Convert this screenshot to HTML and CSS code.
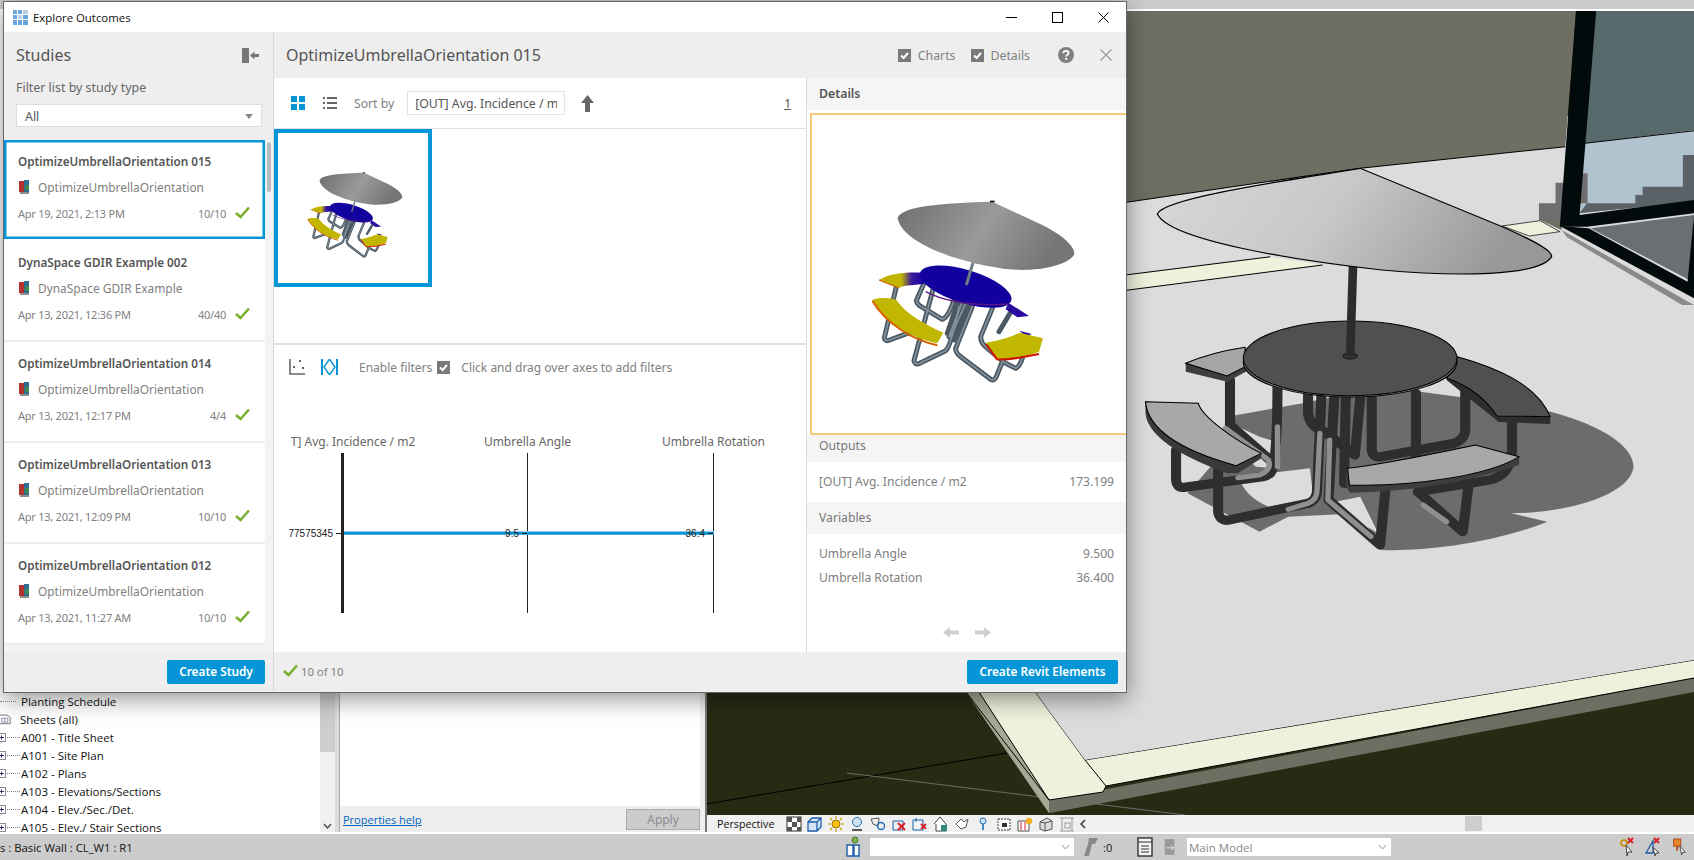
FILE: index.html
```html
<!DOCTYPE html>
<html lang="en">
<head>
<meta charset="utf-8">
<title>Explore Outcomes</title>
<link rel="stylesheet" href="styles.css">
</head>
<body>
<svg class="defs" width="0" height="0" aria-hidden="true">
  <defs>
    <clipPath id="axisClip"><rect x="290.5" y="425" width="510" height="30"/></clipPath>
    <linearGradient id="shadeThumb" x1="0" x2="1" y1="0" y2="0.25">
      <stop offset="0" stop-color="#6e6e6e"/><stop offset="0.55" stop-color="#9a9a9a"/><stop offset="1" stop-color="#757575"/>
    </linearGradient>
    <linearGradient id="benchFade" x1="0" x2="1" y1="0" y2="0">
      <stop offset="0" stop-color="#c2b500"/><stop offset="0.5" stop-color="#c2b500"/><stop offset="0.72" stop-color="#3a1a9a"/><stop offset="1" stop-color="#16009e"/>
    </linearGradient>
    <linearGradient id="shadeCone" x1="0" x2="1" y1="0" y2="0.2">
      <stop offset="0" stop-color="#d8d8d8"/><stop offset="0.5" stop-color="#c8c8c8"/><stop offset="1" stop-color="#989898"/>
    </linearGradient>
    <symbol id="model" viewBox="0 0 960 990">
      <g fill="none" stroke-linecap="round" stroke-linejoin="round">
        <g stroke="#4b5862" stroke-width="15">
          <path d="M345 520 L322 572 Q325 585 340 592 L400 628 Q418 622 435 570"/>
          <path d="M262 530 L226 684 Q228 696 242 690 L312 664"/>
          <path d="M372 538 L315 752 Q318 766 332 760 L410 722 Q426 708 450 590"/>
          <path d="M490 590 L440 715 Q440 730 455 740 L545 808 Q556 815 562 800 L582 750"/>
          <path d="M550 595 L515 680 Q515 700 535 715 L590 760 L620 775 Q632 770 640 745"/>
          <path d="M603 610 L570 665"/>
          <path d="M470 580 L425 680 M458 580 L420 680 M445 580 L415 670 M482 590 L435 690"/>
        </g>
        <g stroke="#83929e" stroke-width="5">
          <path d="M345 520 L322 572 Q325 585 340 592 L400 628 Q418 622 435 570"/>
          <path d="M262 530 L226 684 Q228 696 242 690 L312 664"/>
          <path d="M372 538 L315 752 Q318 766 332 760 L410 722 Q426 708 450 590"/>
          <path d="M490 590 L440 715 Q440 730 455 740 L545 808 Q556 815 562 800 L582 750"/>
          <path d="M550 595 L515 680 Q515 700 535 715 L590 760 L620 775 Q632 770 640 745"/>
          <path d="M470 580 L425 680 M458 580 L420 680"/>
        </g>
      </g>
      <path d="M210 510 C240 490 290 485 340 488 L345 522 C320 525 290 525 270 533 Z" fill="url(#benchFade)"/>
      <path d="M210 510 L270 534" stroke="#d06000" stroke-width="4" fill="none"/>
      <path d="M598 578 L660 618 L625 622 L590 598 Z" fill="#2a0a9f"/>
      <ellipse cx="470" cy="530" rx="143" ry="50" transform="rotate(17 470 530)" fill="#12009f"/>
      <path d="M350 545 Q440 592 600 582" stroke="#5a1a80" stroke-width="4" fill="none"/>
      <path d="M190 570 C210 560 250 565 262 570 C290 610 340 640 403 668 L385 700 C310 685 230 640 190 570 Z" fill="#c2b700"/>
      <path d="M190 572 C230 640 310 690 385 706" stroke="#d76000" stroke-width="6" fill="none"/>
      <path d="M632 662 L668 672 L650 680 Z" fill="#2a0a9f"/>
      <path d="M530 698 C580 690 610 680 632 668 L702 685 L690 726 C650 740 600 750 560 748 Z" fill="#c2b700"/>
      <path d="M532 703 L564 748 C610 750 650 740 690 732" stroke="#cf1100" stroke-width="6" fill="none"/>
      <path d="M492 458 L472 525" stroke="#6b7b86" stroke-width="9"/>
      <path d="M266 325 C270 290 400 278 550 275 L700 345 C780 385 800 420 795 435 C770 470 680 485 600 478 C450 460 280 400 266 325 Z" fill="url(#shadeThumb)"/>
      <rect x="543" y="272" width="14" height="5" fill="#111"/>
    </symbol>
    <symbol id="book" viewBox="0 0 11 14">
      <rect x="0" y="1" width="5" height="11" fill="#b5332e"/>
      <rect x="5" y="0" width="5" height="12" fill="#2c6e8f"/>
      <rect x="6" y="5" width="4" height="5" fill="#3d8a53"/>
      <rect x="1" y="12" width="9" height="2" fill="#8a8f94"/>
    </symbol>
    <symbol id="check" viewBox="0 0 15 13">
      <path d="M1 7 L5.5 11 L14 1.5" fill="none" stroke="#78b02e" stroke-width="2.6"/>
    </symbol>
    <symbol id="tick" viewBox="0 0 13 13">
      <rect width="13" height="13" fill="#7a7a7a"/>
      <path d="M3 6.5 L5.6 9 L10 4" fill="none" stroke="#fff" stroke-width="2"/>
    </symbol>
    <symbol id="expander" viewBox="0 0 7 9">
      <rect x="-3.5" y="0.5" width="9" height="8" fill="#fff" stroke="#8a8a9a"/>
      <path d="M-1 4.5 H4 M1.5 2.5 V6.5" stroke="#33336a" fill="none"/>
    </symbol>
  </defs>
</svg>

<div class="desktop">
  <div class="revit">
    <div class="ribbon-edge"></div>
    <div class="workspace">
      <aside class="browser">
        <div class="tree">
          <div class="tree-row"><span class="leader leader-long"></span>Planting Schedule</div>
          <div class="tree-row tree-root">
            <svg class="sheets-icon" viewBox="0 0 14 14"><path d="M-2 2 H9 L13 5 V13 H-2 Z" fill="#fff" stroke="#555"/><path d="M2 6 H10 V11 H2 Z M6 6 V11" fill="none" stroke="#7a7a9a"/></svg>Sheets (all)
          </div>
          <div class="tree-row"><svg class="exp"><use href="#expander"/></svg><span class="leader"></span>A001 - Title Sheet</div>
          <div class="tree-row"><svg class="exp"><use href="#expander"/></svg><span class="leader"></span>A101 - Site Plan</div>
          <div class="tree-row"><svg class="exp"><use href="#expander"/></svg><span class="leader"></span>A102 - Plans</div>
          <div class="tree-row"><svg class="exp"><use href="#expander"/></svg><span class="leader"></span>A103 - Elevations/Sections</div>
          <div class="tree-row"><svg class="exp"><use href="#expander"/></svg><span class="leader"></span>A104 - Elev./Sec./Det.</div>
          <div class="tree-row"><svg class="exp"><use href="#expander"/></svg><span class="leader"></span>A105 - Elev./ Stair Sections</div>
        </div>
        <div class="vscroll">
          <div class="vscroll-thumb"></div>
          <svg class="vscroll-down" viewBox="0 0 9 6"><path d="M1 1 L4.5 5 L8 1" fill="none" stroke="#444" stroke-width="1.3"/></svg>
        </div>
      </aside>
      <div class="pane-gap"></div>
      <section class="props">
        <div class="props-body"></div>
        <div class="props-foot">
          <a class="props-link" href="#">Properties help</a>
          <button class="apply" type="button">Apply</button>
        </div>
      </section>
      <div class="view-gap"></div>
      <main class="viewport">
        <svg class="scene" viewBox="707 11 987 804" preserveAspectRatio="none">
          <rect x="707" y="11" width="987" height="804" fill="#262c14"/>
          <path d="M706 804 L1007 753" stroke="#000" stroke-width="1" fill="none"/>
          <path d="M847 773 L1185 815" stroke="#6d6d66" stroke-width="1" fill="none"/>
          <!-- slab -->
          <path d="M966 692 L1049 813 L1050 813 L1694 692 L1694 678 L1049 800 L979 692 Z" fill="#6e6e62"/>
          <path d="M966 692 L1049 813 L1049 800 L979 692 Z" fill="#a6a896"/>
          <path d="M979 692 L1036 693 L1085 760 L1694 660 L1694 678 L1106 786 L1103 792 L1049 800 Z" fill="#eef2dc"/>
          <path d="M1036 693 L1085 760 L1694 660 M979 692 L1049 800 L1103 792 L1106 786 L1085 760 M1106 786 L1694 678 M966 692 L1049 800" fill="none" stroke="#000" stroke-width="1"/>
          <path d="M900 200 L1694 100 L1694 660 L1085 760 L1036 693 Z" fill="#dcdcdc"/>
          <!-- wall, stripe, window: coordinates measured at 2.78 x 3 -->
          <g transform="translate(1130 0) scale(.3597 .3333)">
            <path d="M-400 33 H1240 L1210 440 L640 505 L0 605 L-400 660 Z" fill="#6e6e62"/>
            <path d="M-400 660 L0 605 L640 505 L1210 440" fill="none" stroke="#000" stroke-width="3"/>
            <path d="M-400 878 L390 770 L535 795 L-400 925 Z" fill="#eef2dc"/>
            <path d="M-400 878 L390 770 M-400 925 L535 795" fill="none" stroke="#000" stroke-width="3"/>
            <path d="M1035 678 L1140 662 L1195 695 L1110 708 Z" fill="#eef2dc" stroke="#000" stroke-width="2"/>
            <path d="M1183 548 H1205 V660 H1137 V610 H1183 Z" fill="#6e6e6e"/>
            <path d="M1140 660 H1200 V690 Z" fill="#6e6e62"/>
            <path d="M1290 33 H1568 V390 L1265 430 Z" fill="#566a6c"/>
            <path d="M1265 430 L1568 392 V600 L1250 640 Z" fill="#b0c3ce"/>
            <path d="M1250 640 L1270 610 H1405 V585 H1425 V560 H1537 V465 H1568 V605 Z" fill="#5a6268"/>
            <path d="M1240 520 H1272 V610 H1240 Z" fill="#6e6e6e"/>
            <path d="M1240 33 H1296 L1250 645 L1568 600 V640 L1270 680 L1195 680 Z" fill="#020a0c"/>
            <path d="M1265 430 L1568 392" stroke="#000" stroke-width="3"/>
            <path d="M1280 685 L1568 645 L1555 840 Z" fill="#6a7072"/>
            <path d="M1200 690 L1568 915 L1535 915 L1215 712 Z" fill="#8a8a8a"/>
            <path d="M1195 678 L1275 685 L1550 845 L1568 645 V895 Z" fill="#020a0c"/>
          </g>
          <!-- table: coordinates measured at 2.78 x 3 -->
          <g transform="translate(1130 300) scale(.3597 .3333)">
            <path d="M1050 310 C1250 340 1400 420 1400 500 C1390 590 1200 640 1060 640 L1160 665 C1000 735 800 755 700 750 L640 640 L440 650 L360 695 L160 580 L240 480 L270 350 L480 310 L700 260 Z" fill="#6c6c6c"/>
            <path d="M300 530 L500 505 L510 595 L385 620 C340 600 315 570 300 530 Z" fill="#dcdcdc"/>
            <path d="M420 430 L410 505 L350 500 L240 390 L280 370 L360 410 Z" fill="#dcdcdc"/>
            <path d="M550 610 L640 590 L690 700 Z" fill="#dcdcdc"/>
            <g fill="none" stroke-linecap="round" stroke-linejoin="round">
              <g stroke="#2e2e2e" stroke-width="28">
                <path d="M278 240 V375 L400 490 Q395 525 370 530 L150 562 Q128 565 128 535 V450"/>
                <path d="M410 250 Q410 500 390 520"/>
                <path d="M245 510 V635 Q250 665 275 660 L495 610 Q520 600 520 570 L532 290"/>
                <path d="M568 290 L552 600 L695 735 L710 570"/>
                <path d="M495 285 V340 Q500 380 540 395 L625 465 L640 295"/>
                <path d="M600 290 L595 550"/>
                <path d="M672 295 V450 Q675 475 700 470 L900 430 Q930 420 932 390 V270"/>
                <path d="M795 280 V480"/>
                <path d="M1062 365 V450 Q1060 525 1000 540 L800 575 L925 695 L942 550"/>
              </g>
              <g stroke="#8f8f8f" stroke-width="15">
                <path d="M265 385 L385 480 Q395 510 360 525 L300 533"/>
                <path d="M410 380 V500"/>
                <path d="M440 628 L495 610 Q520 600 520 570 L528 400"/>
                <path d="M555 420 L550 600 L670 710"/>
                <path d="M815 615 L880 665"/>
              </g>
            </g>
            <path d="M43 305 L190 310 C200 350 290 420 365 460 V475 L300 520 L270 520 C170 480 50 420 43 340 Z" fill="#3a3a3a"/>
            <path d="M43 305 L190 310 C200 350 290 420 365 460 L295 497 C170 460 50 400 43 305 Z" fill="#a8a8a8" stroke="#000" stroke-width="3"/>
            <path d="M155 190 C210 165 270 150 320 142 L340 205 L270 245 L155 215 Z" fill="#3e3e3e"/>
            <path d="M155 190 C210 165 270 150 320 142 V200 L270 228 Z" fill="#a5a5a5" stroke="#000" stroke-width="3"/>
            <path d="M910 170 C1010 200 1130 250 1168 350 V372 L1025 366 L880 240 Z" fill="#2e2e2e"/>
            <path d="M910 170 C1010 200 1130 250 1168 350 L1020 348 C990 300 950 260 880 235 Z" fill="#505050" stroke="#000" stroke-width="3"/>
            <path d="M600 510 C720 490 850 450 960 435 L1082 470 V495 C960 540 800 575 612 578 L600 560 Z" fill="#3e3e3e"/>
            <path d="M605 505 C720 490 850 460 960 435 L1082 470 C1000 525 800 560 610 555 Z" fill="#a8a8a8" stroke="#000" stroke-width="3"/>
            <ellipse cx="612" cy="185" rx="297" ry="106" fill="#8a8a8a" stroke="#000" stroke-width="3"/>
            <ellipse cx="612" cy="175" rx="297" ry="112" fill="#505050" stroke="#000" stroke-width="3"/>
            <ellipse cx="612" cy="168" rx="20" ry="9" fill="#333" stroke="#000" stroke-width="2"/>
            <path d="M620 -104 L612 168" stroke="#2c2c2c" stroke-width="24"/>
          </g>
          <g transform="translate(1130 0) scale(.3597 .3333)">
            <path d="M76 642 C90 600 350 555 640 505 L1030 678 C1140 730 1175 755 1172 770 C1140 830 900 830 700 810 C450 780 110 720 76 642 Z" fill="url(#shadeCone)" stroke="#000" stroke-width="3.5"/>
          </g>
        </svg>
        <div class="viewbar">
          <span class="view-name">Perspective</span>
          <div class="view-tools">
            <svg viewBox="0 0 16 16"><rect x="1" y="1" width="14" height="14" fill="#fff" stroke="#333"/><path d="M1 1h5v5H1zM6 6h5v5H6zM11 1h4v5h-4zM1 11h5v4H1zM11 11h4v4h-4z" fill="#555"/></svg>
            <svg viewBox="0 0 16 16"><path d="M1 6 L5 2 H14 V11 L10 15 H1 Z M1 6 H10 V15 M10 6 L14 2" fill="#d4e6f5" stroke="#1d5fa8" stroke-width="1.3"/></svg>
            <svg viewBox="0 0 16 16"><circle cx="8" cy="8" r="4" fill="#f4c20d" stroke="#a87800"/><path d="M8 0V3M8 13V16M0 8H3M13 8H16M2 2L4 4M12 12L14 14M14 2L12 4M4 12L2 14" stroke="#c99700" stroke-width="1.2"/></svg>
            <svg viewBox="0 0 16 16"><circle cx="8" cy="6" r="4.5" fill="#cfe4f5" stroke="#2a70b0"/><path d="M3 14H13" stroke="#555" stroke-width="2"/></svg>
            <svg viewBox="0 0 16 16"><path d="M1 3 L9 2 L8 10 L3 8 Z" fill="#eee" stroke="#555"/><circle cx="11" cy="10" r="3.5" fill="none" stroke="#1d6fb8" stroke-width="1.4"/></svg>
            <svg viewBox="0 0 16 16"><path d="M2 5H12V14H2Z" fill="#e8eef5" stroke="#1d5fa8"/><path d="M7 7 L14 14 M14 7 L7 14" stroke="#d8202a" stroke-width="2"/></svg>
            <svg viewBox="0 0 16 16"><path d="M1 4H11V14H1Z" fill="#eef3f8" stroke="#1d5fa8"/><path d="M9 8 L14 13 M14 8 L9 13" stroke="#d8202a" stroke-width="1.8"/><path d="M4 2V6" stroke="#1d5fa8"/></svg>
            <svg viewBox="0 0 16 16"><path d="M1 8 L7 1 L13 8 V15 H3 V8" fill="#fff" stroke="#444"/><rect x="8" y="9" width="6" height="6" fill="#2f8a78"/></svg>
            <svg viewBox="0 0 16 16"><path d="M2 8 L7 3 L10 6 L14 3 L12 11 L7 13 Z" fill="#fff" stroke="#555"/></svg>
            <svg viewBox="0 0 16 16"><circle cx="8" cy="5" r="3" fill="#cfe4f5" stroke="#1d6fb8"/><path d="M8 8V14" stroke="#1d6fb8" stroke-width="1.6"/></svg>
            <svg viewBox="0 0 16 16"><rect x="2" y="3" width="12" height="11" fill="#fff" stroke="#333" stroke-dasharray="2 1"/><rect x="6" y="7" width="5" height="4" fill="#333"/></svg>
            <svg viewBox="0 0 16 16"><path d="M1 5H12V15H1Z" fill="#fff" stroke="#555"/><path d="M4 6V14M8 6V14" stroke="#d8202a"/><circle cx="12" cy="5" r="3.2" fill="#f4b324"/></svg>
            <svg viewBox="0 0 16 16"><path d="M2 6 L9 2 L14 5 V13 L7 15 L2 13 Z" fill="#ddd" stroke="#555"/><path d="M7 7V15M2 6L7 7L14 5" stroke="#555" fill="none"/></svg>
            <svg class="tool-dim" viewBox="0 0 16 16"><path d="M1 2H15M1 15H15M3 2V15M13 2V15" stroke="#999" fill="none"/><rect x="6" y="7" width="5" height="5" fill="none" stroke="#999"/></svg>
            <svg class="tool-chevron" viewBox="0 0 6 10"><path d="M5 1 L1 5 L5 9" fill="none" stroke="#333" stroke-width="1.5"/></svg>
          </div>
          <div class="hscroll-thumb"></div>
        </div>
      </main>
    </div>
    <footer class="status">
      <span class="status-text">s : Basic Wall : CL_W1 : R1</span>
      <svg class="status-worksets" viewBox="0 0 16 22"><circle cx="10" cy="4" r="3" fill="#7fb64b" stroke="#47702a"/><path d="M2 9H8V20H2ZM9 9H14V20H9Z" fill="#fff" stroke="#1d5fa8" stroke-width="1.4"/></svg>
      <div class="status-combo"><svg viewBox="0 0 9 6"><path d="M1 1 L4.5 5 L8 1" fill="none" stroke="#999"/></svg></div>
      <svg class="status-pin" viewBox="0 0 16 22"><path d="M6 2H15L12 8H9L6 20H1L5 8Z" fill="#888"/></svg>
      <span class="status-count">:0</span>
      <svg class="status-list" viewBox="0 0 16 20"><rect x="1" y="1" width="14" height="18" fill="#f4f4f4" stroke="#333" stroke-width="1.4"/><path d="M1 5H15M4 9H12M4 12H12M4 15H12" stroke="#333"/></svg>
      <svg class="status-door" viewBox="0 0 16 20"><path d="M2 1H13V19H2Z" fill="#999"/><path d="M4 11H12M9 8L12 11L9 14" stroke="#eee" fill="none"/></svg>
      <div class="status-combo status-combo-model"><span>Main Model</span><svg viewBox="0 0 9 6"><path d="M1 1 L4.5 5 L8 1" fill="none" stroke="#999"/></svg></div>
      <div class="status-right">
        <svg viewBox="0 0 16 20"><circle cx="5" cy="6" r="3" fill="none" stroke="#c98a00" stroke-width="1.6"/><path d="M9 1 L14 6 M14 1 L9 6" stroke="#d8202a" stroke-width="2"/><path d="M7 8 L13 15 L9 15 L8 19 Z" fill="#fff" stroke="#444"/></svg>
        <svg viewBox="0 0 16 20"><path d="M1 16 L8 4 L8 16 Z" fill="none" stroke="#1d5fa8" stroke-width="1.3"/><path d="M9 1 L14 6 M14 1 L9 6" stroke="#d8202a" stroke-width="2"/><path d="M8 10 L14 16 L11 16 L10 19 Z" fill="#fff" stroke="#444"/></svg>
        <svg viewBox="0 0 18 20"><rect x="3" y="1" width="8" height="8" fill="#e8862a" stroke="#a8401a"/><path d="M7 9V14" stroke="#a8401a" stroke-width="2"/><path d="M10 9 L16 16 L13 16 L12 19 Z" fill="#fff" stroke="#444"/></svg>
      </div>
    </footer>
  </div>

  <div class="dialog">
    <header class="titlebar">
      <svg class="app-icon" viewBox="0 0 15 15"><path d="M0 0h4v4H0zM5 0h4v4H5zM10 0h5v4h-5zM0 5h4v4H0zM5 5h4v4H5zM10 5h5v4h-5zM0 10h4v5H0zM5 10h4v5H5zM10 10h5v5h-5z" fill="#6aa7de"/><path d="M5 5h4v4H5zM10 0h5v4h-5z" fill="#b9d2e8"/></svg>
      <span class="title-text">Explore Outcomes</span>
      <div class="win-controls">
        <svg viewBox="0 0 11 11"><path d="M0 5.5H11" stroke="#000"/></svg>
        <svg viewBox="0 0 11 11"><rect x="0.5" y="0.5" width="10" height="10" fill="none" stroke="#000"/></svg>
        <svg viewBox="0 0 11 11"><path d="M0.5 0.5L10.5 10.5M10.5 0.5L0.5 10.5" stroke="#000"/></svg>
      </div>
    </header>
    <div class="dialog-body">
      <aside class="sidebar">
        <div class="side-top">
          <div class="side-head">
            <h2 class="side-title">Studies</h2>
            <svg class="collapse" viewBox="0 0 17 15"><rect width="7" height="15" fill="#777"/><path d="M8 7.5L12.5 3.5V6H17V9H12.5V11.5Z" fill="#777"/></svg>
          </div>
          <div class="side-label">Filter list by study type</div>
          <div class="select-box">All<span class="caret"></span></div>
        </div>
        <div class="study-list">
          <article class="study study-active">
            <div class="study-name">OptimizeUmbrellaOrientation 015</div>
            <div class="study-type"><svg class="book"><use href="#book"/></svg>OptimizeUmbrellaOrientation</div>
            <div class="study-meta"><span>Apr 19, 2021, 2:13 PM</span><span class="study-count">10/10</span><svg class="ok"><use href="#check"/></svg></div>
          </article>
          <article class="study">
            <div class="study-name">DynaSpace GDIR Example 002</div>
            <div class="study-type"><svg class="book"><use href="#book"/></svg>DynaSpace GDIR Example</div>
            <div class="study-meta"><span>Apr 13, 2021, 12:36 PM</span><span class="study-count">40/40</span><svg class="ok"><use href="#check"/></svg></div>
          </article>
          <article class="study">
            <div class="study-name">OptimizeUmbrellaOrientation 014</div>
            <div class="study-type"><svg class="book"><use href="#book"/></svg>OptimizeUmbrellaOrientation</div>
            <div class="study-meta"><span>Apr 13, 2021, 12:17 PM</span><span class="study-count">4/4</span><svg class="ok"><use href="#check"/></svg></div>
          </article>
          <article class="study">
            <div class="study-name">OptimizeUmbrellaOrientation 013</div>
            <div class="study-type"><svg class="book"><use href="#book"/></svg>OptimizeUmbrellaOrientation</div>
            <div class="study-meta"><span>Apr 13, 2021, 12:09 PM</span><span class="study-count">10/10</span><svg class="ok"><use href="#check"/></svg></div>
          </article>
          <article class="study">
            <div class="study-name">OptimizeUmbrellaOrientation 012</div>
            <div class="study-type"><svg class="book"><use href="#book"/></svg>OptimizeUmbrellaOrientation</div>
            <div class="study-meta"><span>Apr 13, 2021, 11:27 AM</span><span class="study-count">10/10</span><svg class="ok"><use href="#check"/></svg></div>
          </article>
          <div class="list-thumb"></div>
        </div>
        <div class="side-foot"><button class="btn" type="button">Create Study</button></div>
      </aside>
      <div class="main-col">
        <div class="main-head">
          <h1 class="main-title">OptimizeUmbrellaOrientation 015</h1>
          <div class="head-tools">
            <svg class="tick"><use href="#tick"/></svg><span class="head-label head-label-charts">Charts</span>
            <svg class="tick"><use href="#tick"/></svg><span class="head-label">Details</span>
            <svg class="help" viewBox="0 0 16 16"><circle cx="8" cy="8" r="8" fill="#808080"/><path d="M5.4 6.2C5.4 4.6 6.6 3.8 8 3.8C9.5 3.8 10.6 4.7 10.6 6C10.6 7.7 8.2 7.8 8.2 9.6" fill="none" stroke="#fff" stroke-width="1.8"/><rect x="7.2" y="10.8" width="2" height="2" fill="#fff"/></svg>
            <svg class="head-close" viewBox="0 0 12 12"><path d="M0.5 0.5L11.5 11.5M11.5 0.5L0.5 11.5" stroke="#999" stroke-width="1.1"/></svg>
          </div>
        </div>
        <div class="main-body">
          <div class="results">
            <div class="toolbar">
              <svg class="tool-grid" viewBox="0 0 14 14"><path d="M0 0h6v6H0zM8 0h6v6H8zM0 8h6v6H0zM8 8h6v6H8z" fill="#0696d7"/></svg>
              <svg class="tool-list" viewBox="0 0 14 14"><path d="M0 1h2v2H0zM4 1h10v2H4zM0 6h2v2H0zM4 6h10v2H4zM0 11h2v2H0zM4 11h10v2H4z" fill="#666"/></svg>
              <span class="sort-label">Sort by</span>
              <div class="sort-box"><span>[OUT] Avg. Incidence / m2</span></div>
              <svg class="sort-dir" viewBox="0 0 13 17"><path d="M6.5 0L13 8H9V17H4V8H0Z" fill="#666"/></svg>
              <span class="pager">1</span>
            </div>
            <div class="thumbs">
              <div class="thumb"><svg class="thumb-model" viewBox="0 20 960 960"><use href="#model" width="960" height="990"/></svg></div>
            </div>
            <div class="charts">
              <div class="chart-tools">
                <svg class="ico-scatter" viewBox="0 0 16 16"><path d="M1 0V15H16" fill="none" stroke="#666" stroke-width="1.6"/><path d="M4 7h2v2H4zM10 1h2v2h-2zM13 8h2v2h-2z" fill="#666"/></svg>
                <svg class="ico-parallel" viewBox="0 0 17 16"><path d="M1 0V16M16 0V16" stroke="#0696d7" stroke-width="2"/><path d="M8.5 0L3 8L8.5 16M8.5 0L14 8L8.5 16" fill="none" stroke="#0696d7" stroke-width="1.4"/></svg>
                <span class="filter-label">Enable filters</span>
                <svg class="tick tick-filter"><use href="#tick"/></svg>
                <span class="filter-hint">Click and drag over axes to add filters</span>
              </div>
              <svg class="parallel" viewBox="289 425 511 195">
                <text class="axis-label axis-label-clip" x="342" y="446" text-anchor="middle">[OUT] Avg. Incidence / m2</text>
                <text class="axis-label" x="527.5" y="446" text-anchor="middle">Umbrella Angle</text>
                <text class="axis-label" x="713.5" y="446" text-anchor="middle">Umbrella Rotation</text>
                <rect x="341" y="453" width="3" height="160" fill="#222"/>
                <rect x="527" y="453" width="1" height="160" fill="#222"/>
                <rect x="713" y="453" width="1" height="160" fill="#222"/>
                <rect x="344" y="531" width="370" height="4" fill="#8fcbe8"/>
                <rect x="344" y="532" width="370" height="2.5" fill="#0696d7"/>
                <path d="M336 533.5H341M522 533.5H527M708 533.5H713" stroke="#222"/>
                <text class="axis-tick" x="333" y="537" text-anchor="end">77575345</text>
                <text class="axis-tick" x="519" y="537" text-anchor="end">9.5</text>
                <text class="axis-tick" x="705" y="537" text-anchor="end">36.4</text>
              </svg>
            </div>
          </div>
          <aside class="details">
            <div class="details-head">Details</div>
            <div class="details-pic"><svg class="details-model" viewBox="9 15 939 954"><use href="#model" width="960" height="990"/></svg></div>
            <div class="details-sec details-sec-out">Outputs</div>
            <div class="kv kv-out"><span>[OUT] Avg. Incidence / m2</span><span>173.199</span></div>
            <div class="details-sec details-sec-var">Variables</div>
            <div class="vars">
              <div class="kv"><span>Umbrella Angle</span><span>9.500</span></div>
              <div class="kv"><span>Umbrella Rotation</span><span>36.400</span></div>
              <div class="arrows">
                <svg viewBox="0 0 16 11"><path d="M0 5.5L7 0V3.5H16V7.5H7V11Z" fill="#d0d0d0"/></svg>
                <svg viewBox="0 0 16 11"><path d="M16 5.5L9 0V3.5H0V7.5H9V11Z" fill="#d0d0d0"/></svg>
              </div>
            </div>
          </aside>
        </div>
        <div class="main-foot">
          <svg class="foot-ok"><use href="#check"/></svg>
          <span class="foot-count">10 of 10</span>
          <button class="btn btn-revit" type="button">Create Revit Elements</button>
        </div>
      </div>
    </div>
  </div>
</div>
</body>
</html>
```
FILE: styles.css
```css
* { box-sizing: border-box; }
html, body { margin: 0; padding: 0; height: 100%; overflow: hidden; }
body { font-family: "Noto Sans", "Liberation Sans", sans-serif; background: #ccc; color: #666; }
.defs { position: absolute; }
.desktop { position: relative; width: 1694px; height: 860px; overflow: hidden; }

/* Revit host window */
.revit { display: flex; flex-direction: column; width: 100%; height: 100%; background: #ccc; font-family: "Open Sans", "Liberation Sans", sans-serif; color: #111; }
.ribbon-edge { height: 11px; background: #ccc; border-bottom: 2px solid #fff; flex: none; }
.workspace { flex: 1; display: flex; min-height: 0; background: #fff; padding-bottom: 2px; }
.browser { width: 335px; flex: none; display: flex; background: #fff; }
.tree { flex: 1; display: flex; flex-direction: column; justify-content: flex-end; overflow: hidden; min-width: 0; }
.tree-row { display: flex; align-items: center; height: 18px; flex: none; font-size: 11.5px; white-space: nowrap; }
.tree-row:last-child { margin-bottom: -4px; }
.tree-root { gap: 9px; }
.sheets-icon { width: 11px; height: 14px; }
.exp { width: 7px; height: 9px; flex: none; }
.leader { width: 13px; margin-right: 1px; border-top: 1px dotted #888; flex: none; }
.leader-long { width: 16px; margin: 0 5px 0 0; }
.vscroll { width: 15px; flex: none; background: #f0f0f0; display: flex; flex-direction: column; align-items: center; padding-bottom: 3px; }
.vscroll-thumb { width: 15px; height: 741px; background: #cdcdcd; }
.vscroll-down { width: 9px; height: 6px; margin-top: auto; }
.pane-gap { width: 5px; flex: none; background: #dcdcdc; border-right: 1px solid #a8a8a8; }
.props { width: 360px; flex: none; display: flex; flex-direction: column; }
.props-body { flex: 1; background: #fff; }
.props-foot { height: 26px; flex: none; background: #eee; display: flex; align-items: center; justify-content: space-between; padding: 0 0 0 3px; }
.props-link { font-size: 11px; color: #0563c1; }
.apply { width: 74px; height: 21px; padding: 0; background: #ccc; border: 1px solid #aaa; color: #888; font: 12px "Open Sans", sans-serif; }
.view-gap { width: 7px; flex: none; background: #f0f0f0; border-right: 2px solid #777; }
.viewport { flex: 1; display: flex; flex-direction: column; min-width: 0; }
.scene { display: block; width: 987px; height: 804px; flex: none; }
.viewbar { height: 17px; flex: none; display: flex; align-items: center; background: #f0f0f0; padding-left: 10px; }
.view-name { font-size: 10.7px; width: 69px; flex: none; }
.view-tools { display: flex; align-items: center; gap: 5px; }
.view-tools svg { width: 16px; height: 16px; flex: none; }
.view-tools .tool-chevron { width: 6px; height: 10px; }
.hscroll-thumb { width: 17px; height: 15px; margin-left: 379px; background: #cdcdcd; }
.status { height: 26px; flex: none; display: flex; align-items: center; background: #ccc; position: relative; }
.status-text { font-size: 11.3px; width: 845px; flex: none; white-space: nowrap; margin-top: 1px; }
.status-worksets { width: 16px; height: 22px; margin-left: 0; flex: none; }
.status-combo { width: 204px; height: 18px; margin-left: 9px; flex: none; background: #fff; display: flex; align-items: center; justify-content: flex-end; padding-right: 4px; }
.status-combo svg { width: 9px; height: 6px; }
.status-combo-model { margin-left: 10px; justify-content: space-between; padding-left: 2px; color: #888; font-size: 11.5px; }
.status-pin { width: 16px; height: 22px; margin-left: 9px; flex: none; }
.status-count { font-size: 11px; width: 12px; margin-left: 4px; flex: none; }
.status-list { width: 16px; height: 20px; margin-left: 22px; flex: none; }
.status-door { width: 14px; height: 20px; margin-left: 10px; flex: none; }
.status-right { display: flex; gap: 10px; margin-left: 228px; }
.status-right svg { width: 16px; height: 20px; flex: none; }

/* Explore Outcomes dialog */
.dialog { position: absolute; left: 3px; top: 1px; width: 1124px; height: 692px; display: flex; flex-direction: column; background: #fff; border: 1px solid #666; box-shadow: 0 6px 22px rgba(0,0,0,.42); overflow: hidden; }
.titlebar { height: 30px; flex: none; display: flex; align-items: center; background: #fff; padding-left: 9px; }
.app-icon { width: 15px; height: 15px; flex: none; }
.title-text { margin-left: 5px; font: 11.4px "Open Sans", sans-serif; color: #111; }
.win-controls { margin-left: auto; display: flex; align-items: center; gap: 35px; padding-right: 17px; }
.win-controls svg { width: 11px; height: 11px; display: block; }
.dialog-body { flex: 1; display: flex; min-height: 0; }

.sidebar { width: 270px; flex: none; display: flex; flex-direction: column; background: #eee; border-right: 1px solid #d5dbe0; }
.side-top { padding: 12px 12px 0; flex: none; }
.side-head { display: flex; align-items: center; justify-content: space-between; height: 22px; padding-right: 2px; }
.side-title { margin: 0; font-size: 16px; font-weight: 400; color: #555; }
.collapse { width: 17px; height: 15px; }
.side-label { margin-top: 13px; font-size: 12.4px; line-height: 18px; color: #666; }
.select-box { position: relative; margin-top: 7px; height: 23px; width: 246px; background: #fff; border: 1px solid #ddd; padding-left: 8px; font-size: 12.4px; line-height: 23px; color: #555; }
.caret { position: absolute; right: 8px; top: 9px; border: 4px solid transparent; border-top: 5px solid #888; border-bottom: 0; }
.study-list { position: relative; flex: 1; min-height: 0; margin-top: 13px; overflow: hidden; background: #f3f3f3; padding-right: 8px; }
.study { height: 101px; padding: 12px 14px 0; background: #fff; border-bottom: 2px solid #eee; }
.study-active { box-shadow: inset 0 0 0 2.5px #0696d7; border-bottom-color: #fff; }
.study-name { font-size: 11.7px; font-weight: 600; line-height: 18px; color: #555; white-space: nowrap; }
.study-type { display: flex; align-items: center; margin-top: 8px; font-size: 11.9px; line-height: 18px; color: #808080; white-space: nowrap; }
.book { width: 11px; height: 14px; margin: 0 8px 0 1px; flex: none; }
.study-meta { display: flex; align-items: center; margin-top: 9px; font-size: 11px; letter-spacing: -.25px; line-height: 18px; color: #808080; white-space: nowrap; }
.study-count { margin-left: auto; }
.ok { width: 15px; height: 13px; margin: -3px 1px 0 9px; flex: none; }
.list-thumb { position: absolute; top: 2px; right: 2px; width: 4px; height: 50px; background: #bbb; border-radius: 2px; }
.side-foot { height: 40px; flex: none; display: flex; justify-content: flex-end; padding: 8px 8px 0 0; }
.btn { height: 24px; padding: 0 0 2px; width: 98px; background: #0696d7; color: #fff; border: 0; border-radius: 2px; font: 600 11.8px "Noto Sans", sans-serif; }
.btn-revit { width: 151px; margin-left: auto; }

.main-col { flex: 1; min-width: 0; display: flex; flex-direction: column; background: #fff; }
.main-head { height: 46px; flex: none; display: flex; align-items: center; background: #eee; padding-left: 12px; }
.main-title { margin: 0; font-size: 16px; font-weight: 400; color: #555; white-space: nowrap; }
.head-tools { margin-left: auto; display: flex; align-items: center; padding-right: 14px; }
.tick { width: 13px; height: 13px; flex: none; }
.head-label { margin-left: 7px; margin-right: 17px; font-size: 12.3px; color: #808080; }
.head-label-charts { margin-right: 15px; }
.help { width: 16px; height: 16px; margin-left: 11px; flex: none; }
.head-close { width: 12px; height: 12px; margin-left: 26px; flex: none; }
.main-body { flex: 1; min-height: 0; display: flex; }
.results { flex: 1; min-width: 0; display: flex; flex-direction: column; }
.toolbar { height: 51px; flex: none; display: flex; align-items: center; padding-left: 17px; border-bottom: 1px solid #dde3e8; }
.tool-grid, .tool-list { width: 14px; height: 14px; flex: none; }
.tool-list { margin-left: 18px; }
.sort-label { margin-left: 17px; font-size: 12.2px; color: #808080; }
.sort-box { margin-left: 13px; width: 158px; height: 24px; border: 1px solid #e4e4e4; overflow: hidden; padding: 0 7px; font-size: 12.3px; line-height: 23px; color: #555; white-space: nowrap; }
.sort-box span { display: block; width: 142px; overflow: hidden; }
.sort-dir { width: 13px; height: 17px; margin-left: 16px; flex: none; }
.pager { margin-left: 190px; font-size: 12px; color: #555; text-decoration: underline; }
.thumbs { height: 214px; flex: none; border-bottom: 2px solid #dde3e8; box-sizing: content-box; }
.thumb { width: 158px; height: 158px; border: 4px solid #0696d7; background: #fff; }
.thumb-model { display: block; width: 150px; height: 150px; }
.charts { flex: 1; min-height: 0; }
.chart-tools { display: flex; align-items: center; height: 20px; margin-top: 12px; padding-left: 15px; }
.ico-scatter { width: 16px; height: 16px; flex: none; }
.ico-parallel { width: 17px; height: 16px; margin-left: 16px; flex: none; }
.filter-label { margin-left: 21px; font-size: 12px; color: #808080; white-space: nowrap; }
.tick-filter { margin-left: 5px; }
.filter-hint { margin-left: 11px; font-size: 12px; color: #808080; white-space: nowrap; }
.parallel { display: block; width: 511px; height: 195px; margin: 48px 0 0 15px; }
.axis-label { font-size: 12px; fill: #666; }
.axis-label-clip { clip-path: url(#axisClip); }
.axis-tick { font: 10px "Liberation Sans", sans-serif; fill: #222; }

.details { width: 320px; flex: none; display: flex; flex-direction: column; background: #fff; border-left: 1px solid #d5dbe0; }
.details-head { height: 32px; flex: none; background: #f5f5f5; padding-left: 12px; font-size: 12.3px; font-weight: 600; line-height: 32px; color: #555; }
.details-pic { margin-top: 3px; margin-left: 3px; height: 322px; flex: none; border: 2px solid #f5c878; border-right: 0; background: #fff; overflow: hidden; }
.details-model { display: block; width: 313px; height: 318px; }
.details-sec { flex: none; background: #f5f5f5; padding-left: 12px; font-size: 12.2px; color: #777; }
.details-sec-out { height: 27px; line-height: 21px; }
.details-sec-var { height: 32px; line-height: 32px; }
.kv { display: flex; justify-content: space-between; align-items: center; height: 24px; padding: 0 12px; font-size: 12.1px; color: #808080; }
.kv-out { height: 40px; flex: none; padding-bottom: 2px; }
.vars { flex: 1; min-height: 0; display: flex; flex-direction: column; padding-top: 7px; }
.arrows { margin-top: auto; margin-bottom: 14px; display: flex; justify-content: center; gap: 16px; }
.arrows svg { width: 16px; height: 11px; }
.main-foot { height: 40px; flex: none; display: flex; align-items: center; background: #eee; padding: 0 8px 0 9px; }
.foot-ok { width: 15px; height: 13px; margin-top: -4px; flex: none; }
.foot-count { margin-left: 3px; margin-bottom: 1px; font-size: 11.3px; color: #808080; }
```
